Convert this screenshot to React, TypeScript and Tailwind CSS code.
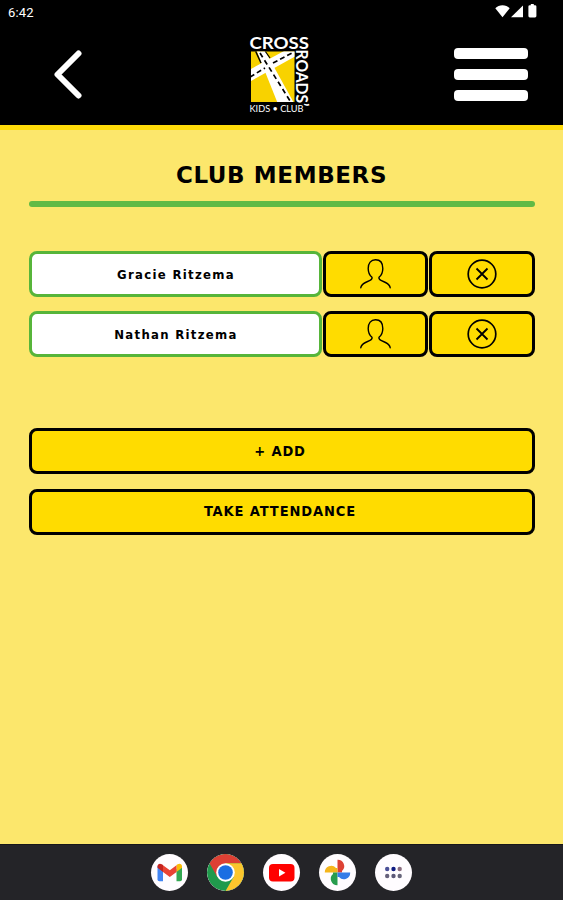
const members = ["Gracie Ritzema", "Nathan Ritzema"];

function StatusIcons() {
  return (
    <svg width="44" height="16" viewBox="0 0 44 16" fill="white">
      <path d="M.3 4.2C4 .2 11 .2 14.7 4.2L7.5 13.2z" />
      <path d="M16 13.3L28 1.5V13.3z" />
      <path d="M35.8 1.2V0h3v1.2h1.2q1.4 0 1.4 1.4v9.4q0 1.4-1.4 1.4h-5.2q-1.4 0-1.4-1.4V2.6q0-1.4 1.4-1.4z" />
    </svg>
  );
}

function Logo() {
  return (
    <svg width="72" height="90" viewBox="245 31 72 90" className="overflow-visible" fontFamily="Lato, sans-serif">
      <defs>
        <clipPath id="sign">
          <rect x="251" y="51.500" width="43.500" height="50.500" />
        </clipPath>
      </defs>
      <g clipPath="url(#sign)">
        <rect x="251" y="51" width="44" height="51" fill="#f8d200" />
        <path d="M249 70L285 50.500H297V55.500L249 82z" fill="white" />
        <path d="M256 49H264L294.500 104H278z" fill="white" />
        <path d="M255.500 51L261 63" stroke="black" strokeWidth="1.500" />
        <path d="M265 51L270 58" stroke="black" strokeWidth="1.200" />
        <path d="M260 53L292 104" stroke="black" strokeWidth="1.700" strokeDasharray="5 3.500" />
        <path d="M250 77L265 68M273 63L292 53" stroke="black" strokeWidth="1.700" strokeDasharray="5 3" />
      </g>
      <g fill="white">
        <text x="249.500" y="49" fontSize="17" fontWeight="700" textLength="59.500" lengthAdjust="spacingAndGlyphs">
          CROSS
        </text>
        <text
          transform="translate(296 49.500) rotate(90)"
          fontSize="17"
          fontWeight="700"
          textLength="57"
          lengthAdjust="spacingAndGlyphs"
        >
          ROADS’
        </text>
        <text x="249.500" y="112" fontSize="9" textLength="54" lengthAdjust="spacingAndGlyphs">
          KIDS • CLUB
        </text>
      </g>
    </svg>
  );
}

function PersonIcon() {
  return (
    <svg width="32" height="32" viewBox="0 0 32 32" fill="none" stroke="black" strokeWidth="1.400" strokeLinecap="round">
      <path d="M1.800 29.800C2 27.500 3.500 26 6.500 24.500l4.500-2.200c1.800-.9 2.300-1.800 2-3C10.600 17.400 9.200 14.500 9.200 10.500 9.200 5 11.900 1.800 16.500 1.800S23.800 5 23.800 10.500c0 4-1.400 6.900-3.800 8.800-.3 1.200.2 2.100 2 3l4.500 2.200c3 1.500 4.500 3 4.700 5.300" />
    </svg>
  );
}

function RemoveIcon() {
  return (
    <svg width="30" height="30" viewBox="0 0 30 30" fill="none" stroke="black" strokeWidth="1.700">
      <circle cx="15" cy="15" r="13.800" />
      <path d="M9.500 9.500l11 11M20.500 9.500l-11 11" strokeWidth="1.800" />
    </svg>
  );
}

function GmailIcon() {
  return (
    <svg width="37" height="37" viewBox="0 0 37 37">
      <path d="M6.500 12v13.500q0 1.800 1.800 1.800H12V15z" fill="#4285f4" />
      <path d="M25.500 15v12.300h3.700q1.800 0 1.800-1.800V12z" fill="#34a853" />
      <path d="M25.500 11v7l5.500-4.200v-1.500c0-2.500-2.500-3.200-4.300-2z" fill="#fbbc04" />
      <path d="M12 11v7l-5.500-4.200v-1.500c0-2.500 2.500-3.200 4.300-2z" fill="#c5221f" />
      <path d="M12 11.200l6.800 5 6.700-5v6.800l-6.700 5-6.800-5z" fill="#ea4335" />
    </svg>
  );
}

function ChromeIcon() {
  return (
    <svg width="37" height="37" viewBox="0 0 37 37">
      <circle cx="18.500" cy="18.500" r="18.500" fill="#209a4c" />
      <path d="M2.480 9.250A18.500 18.500 0 0 1 34.520 9.250H18.500L10.490 23.130z" fill="#dd4034" />
      <path d="M34.520 9.250A18.500 18.500 0 0 1 18.500 37L26.510 23.130 18.500 9.250z" fill="#fcc62d" />
      <circle cx="18.500" cy="18.500" r="9.300" fill="white" />
      <circle cx="18.500" cy="18.500" r="7.300" fill="#1b6ee2" />
    </svg>
  );
}

function YoutubeIcon() {
  return (
    <svg width="37" height="37" viewBox="0 0 37 37">
      <rect x="6" y="10" width="25.500" height="17.500" rx="4" fill="#f00" />
      <path d="M16 15v7.600l6.400-3.800z" fill="white" />
    </svg>
  );
}

function PhotosIcon() {
  return (
    <svg width="37" height="37" viewBox="0 0 37 37">
      <path d="M18.500 18.500V5.800a6.400 6.400 0 0 1 4.500 11.200v1.500z" fill="#dd4034" />
      <path d="M18.500 18.500H5.800a6.400 6.400 0 0 1 11.200-4.500h1.500z" fill="#f5b51c" />
      <path d="M18.500 18.500V31.200a6.400 6.400 0 0 1-4.500-11.200v-1.500z" fill="#289c4e" />
      <path d="M18.500 18.500H31.200a6.400 6.400 0 0 1-11.200 4.500h-1.500z" fill="#357ce8" />
    </svg>
  );
}

function AppsIcon() {
  return (
    <svg width="37" height="37" viewBox="0 0 37 37">
      <circle cx="12.200" cy="15" r="2.200" fill="#4b5098" />
      <circle cx="18.500" cy="15" r="2.200" fill="#101c82" />
      <circle cx="24.700" cy="15" r="2.200" fill="#8a6d80" />
      <circle cx="12.200" cy="22" r="2.200" fill="#66617c" />
      <circle cx="18.500" cy="22" r="2.200" fill="#5c5878" />
      <circle cx="24.700" cy="22" r="2.200" fill="#66647a" />
    </svg>
  );
}

const dock = [GmailIcon, ChromeIcon, YoutubeIcon, PhotosIcon, AppsIcon];

export default function App() {
  return (
    <div className="flex h-[900px] w-[563px] flex-col overflow-hidden bg-[#fce76c] font-['DejaVu_Sans_Condensed','DejaVu_Sans',sans-serif] text-black">
      <header className="h-[130px] shrink-0 border-b-[5px] border-[#ffdc0a] bg-black text-white">
        <div className="flex h-6 items-start justify-between pt-1 pr-[24px] pl-2">
          <span className="pt-px font-['Roboto',sans-serif] text-[13px] leading-4 tracking-[0.2px]">6:42</span>
          <StatusIcons />
        </div>
        <div className="grid grid-cols-3 items-center pr-[35px] pl-[53px]">
          <button type="button" className="-mt-px w-fit">
            <svg width="30" height="50" viewBox="0 0 30 50" fill="none" stroke="white" strokeWidth="6" strokeLinecap="round" strokeLinejoin="round">
              <path d="M25.500 4.500L4.500 25.500 25.500 46.500" />
            </svg>
          </button>
          <div className="-ml-[18px] flex h-[101px] justify-center pt-[7px]">
            <Logo />
          </div>
          <button type="button" className="flex w-[74px] flex-col gap-[10px] justify-self-end">
            <span className="h-[11px] rounded-[4px] bg-white" />
            <span className="h-[11px] rounded-[4px] bg-white" />
            <span className="h-[11px] rounded-[4px] bg-white" />
          </button>
        </div>
      </header>

      <main className="flex-1 px-[28.5px] pt-[29px]">
        <h1 className="text-center font-['DejaVu_Sans',sans-serif] text-[23px] leading-8 font-bold tracking-[0.6px]">CLUB MEMBERS</h1>
        <div className="mt-[10px] h-[6px] rounded-full bg-[#61ba45]" />
        <ul className="mt-[44px] flex flex-col gap-[14px]">
          {members.map((name) => (
            <li key={name} className="flex h-[46px] gap-px">
              <div className="flex w-[293px] items-center justify-center rounded-[8px] border-3 border-[#57b53a] bg-white pt-px pl-[2px] text-[13px] font-bold tracking-[1.3px]">
                {name}
              </div>
              <button type="button" className="flex flex-1 items-center justify-center rounded-[8px] border-3 border-black bg-[#ffdc00]">
                <PersonIcon />
              </button>
              <button type="button" className="flex flex-1 items-center justify-center rounded-[8px] border-3 border-black bg-[#ffdc00]">
                <RemoveIcon />
              </button>
            </li>
          ))}
        </ul>
        <div className="mt-[71.4px] flex flex-col gap-[14.5px] text-[14.5px] font-bold tracking-[0.9px]">
          <button type="button" className="h-[46px] rounded-[8px] border-3 border-black bg-[#ffdc00] pr-[3px]">
            + ADD
          </button>
          <button type="button" className="h-[46px] rounded-[8px] border-3 border-black bg-[#ffdc00] pr-[3px]">
            TAKE ATTENDANCE
          </button>
        </div>
      </main>

      <nav className="flex h-14 shrink-0 items-center justify-center gap-[19px] border-t border-[#17171a] bg-[#242428]">
        {dock.map((Icon, i) => (
          <button key={i} type="button" className="overflow-hidden rounded-full bg-[#fffcff]">
            <Icon />
          </button>
        ))}
      </nav>
    </div>
  );
}
